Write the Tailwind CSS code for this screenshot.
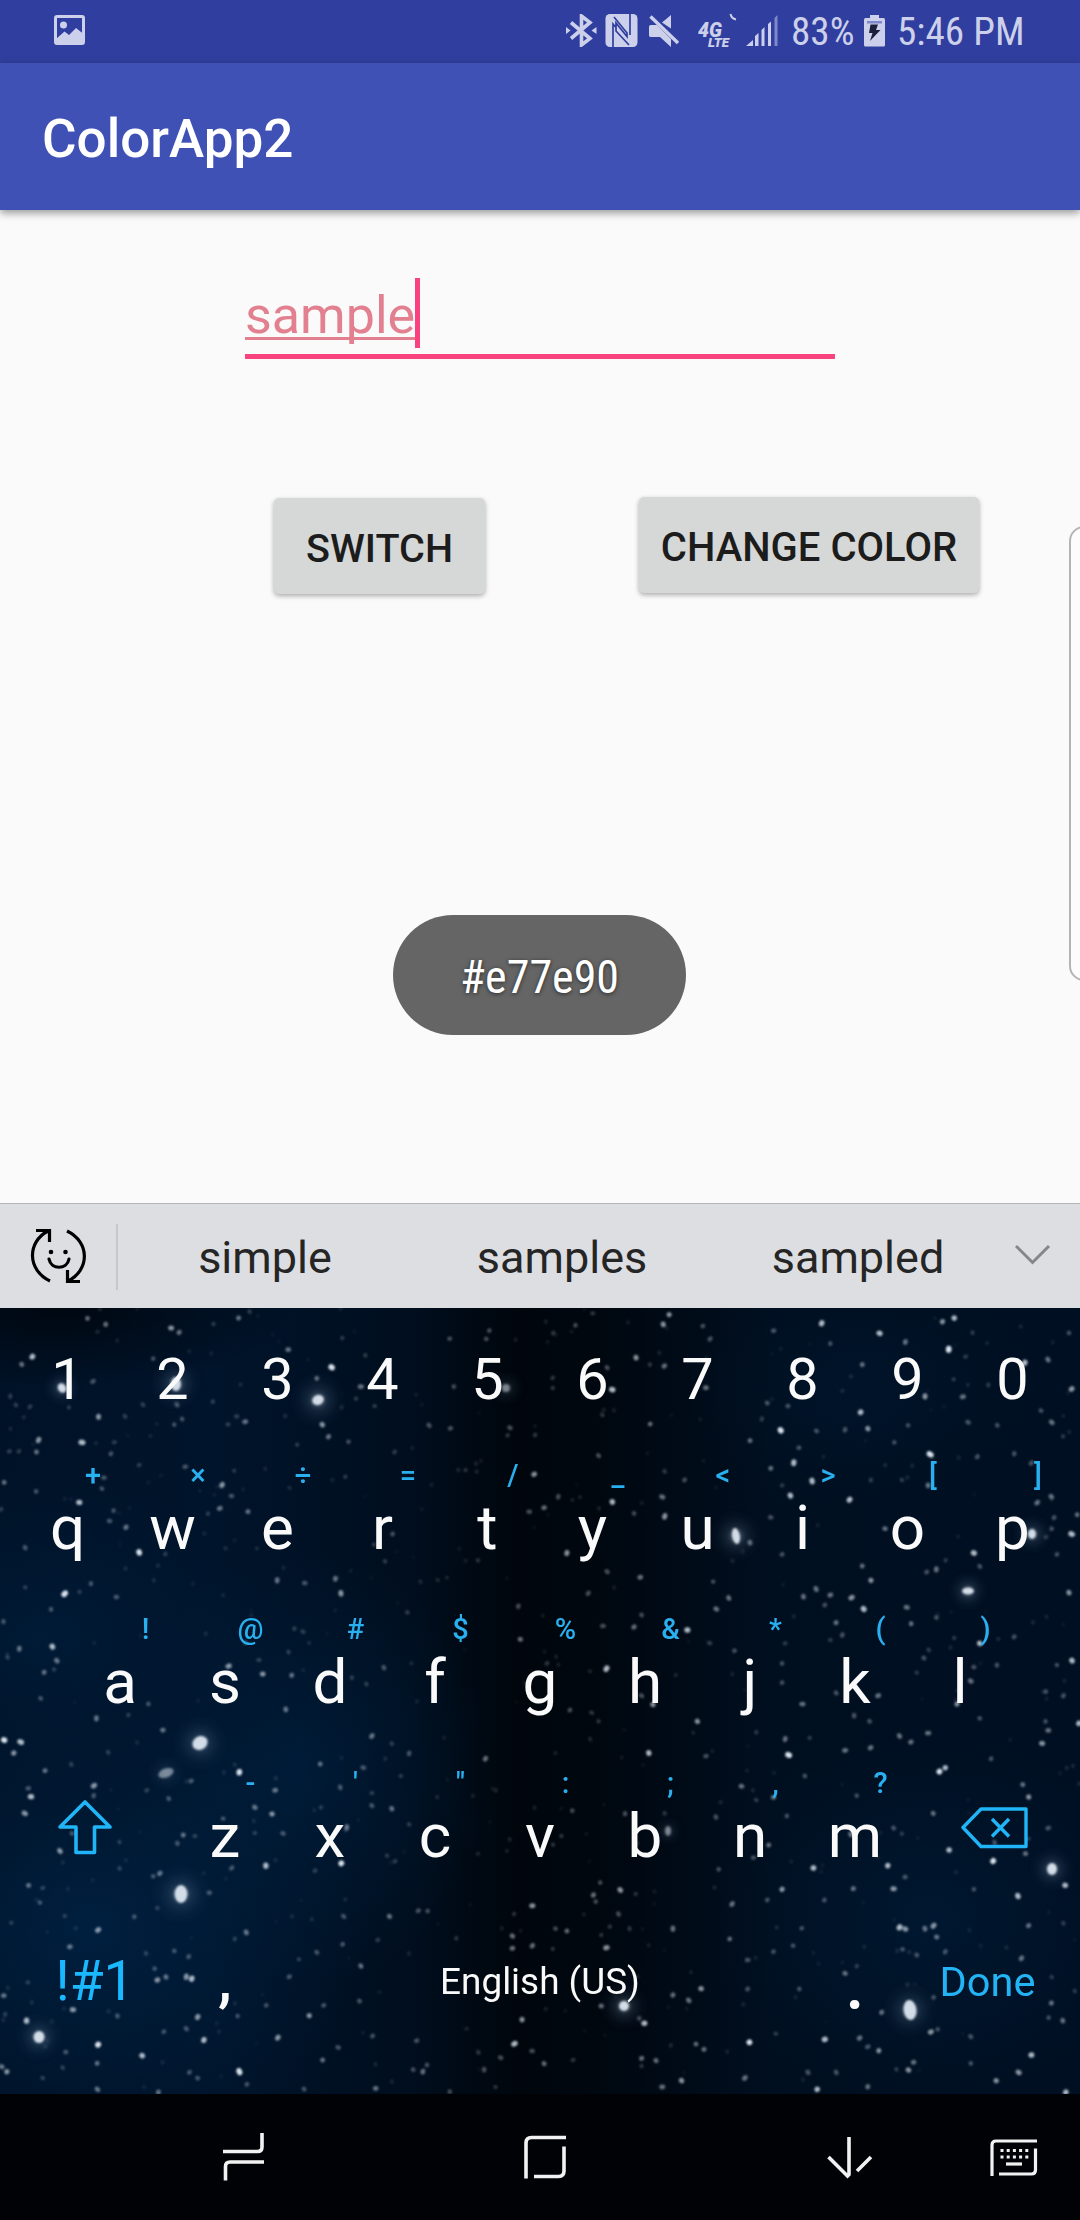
<!DOCTYPE html>
<html lang="en">
<head>
<meta charset="utf-8">
<title>ColorApp2</title>
<script src="https://cdn.jsdelivr.net/npm/@tailwindcss/browser@4"></script>
</head>
<body class="w-[1080px] h-[2220px] overflow-hidden bg-[#fafafa] font-[Roboto,sans-serif]">
<div class="relative flex flex-col w-[1080px] h-[2220px]">

  <!-- Status bar -->
  <header class="flex h-[63px] shrink-0 bg-[#303f9f] text-[#cdd0ea]">
    <svg class="ml-[54px] mt-[15px] shrink-0" width="31" height="30" viewBox="0 0 31 30"><rect x="1.5" y="1.5" width="28" height="27" rx="1.5" fill="none" stroke="currentColor" stroke-width="3"/><circle cx="9.5" cy="10" r="3.5" fill="currentColor"/><path d="M2 24L10.500 16.500L15 20L22 13L29 18.500V28H2Z" fill="currentColor"/></svg>
    <svg class="ml-[481px] mt-[14px] shrink-0" width="31" height="33" viewBox="0 0 31 33"><path d="M5 8.500L24 24.500L15.500 31V2L24 8.500L5 24.500" fill="none" stroke="currentColor" stroke-width="3.600"/><path d="M0 13L4.500 16.500L0 20ZM30.500 13L25.500 16.500L30.500 20Z" fill="currentColor"/></svg>
    <svg class="ml-[8px] mt-[14px] shrink-0" width="33" height="33" viewBox="0 0 33 33"><rect x=".5" y="0" width="32" height="33" rx="4.500" fill="currentColor"/><path d="M8 33V10L11 13.500V9L22 22.500V19L9 3M25 0V21M11 14V17L24 31" fill="none" stroke="#303f9f" stroke-width="1.700"/></svg>
    <svg class="ml-[11px] mt-[14px] shrink-0" width="31" height="34" viewBox="0 0 31 34"><path d="M0 12.500Q0 11 2 11H8L22 25V33L11 23H2Q0 23 0 21.500ZM13 8.500L22 1V14.500Z" fill="currentColor"/><path d="M1.500 2.500L29 29" stroke="currentColor" stroke-width="3.400"/></svg>
    <svg class="ml-[18px] mt-[13px] shrink-0" width="42" height="36" viewBox="0 0 42 36"><text x="0" y="23.500" font-size="19.500" font-weight="900" font-style="italic" fill="currentColor" textLength="24" lengthAdjust="spacingAndGlyphs">4G</text><text x="10" y="34" font-size="13" font-weight="900" font-style="italic" fill="currentColor" textLength="21" lengthAdjust="spacingAndGlyphs">LTE</text><path d="M32.500 1Q33.500 5.500 38 6.500" stroke="currentColor" stroke-width="2" fill="none"/></svg>
    <svg class="ml-[6px] mt-[15px] shrink-0" width="33" height="32" viewBox="0 0 33 32"><path d="M0 31L7 25V31ZM9 21L12.500 18V31H9ZM15.500 15L18.500 12V31H15.500ZM22 9L25 6.500V31H22Z" fill="currentColor"/><path d="M28.500 3L31.500 0V31H28.500Z" fill="#7f88c8"/></svg>
    <div class="ml-[12px] w-[64px] text-[39.200px] leading-[65px] whitespace-nowrap"><span class="inline-block [font-stretch:75%]">83%</span></div>
    <svg class="ml-[9px] mt-[15px] shrink-0" width="21" height="32" viewBox="0 0 21 32"><path d="M6 0H15V3H19.500Q21 3 21 5V30Q21 31.500 19.500 31.500H1.500Q0 31.500 0 30V5Q0 3 1.500 3H6Z" fill="currentColor"/><path d="M3 6H18V8.500H3Z" fill="#7f88c8"/><path d="M6.500 9.500H14L12 15H16.500L6 26L8.500 18H5Z" fill="#1c2038"/></svg>
    <div class="ml-[12px] w-[140px] text-[39.200px] leading-[65px] whitespace-nowrap"><span class="inline-block [font-stretch:75%]">5:46 PM</span></div>
  </header>

  <!-- App bar -->
  <div class="relative z-10 h-[147px] shrink-0 bg-[#3f51b5] pl-[42px] text-[53px] font-medium leading-[152px] text-white shadow-[0_3px_8px_rgba(0,0,0,0.4)]">ColorApp2</div>

  <!-- Activity content -->
  <main class="flex flex-col h-[993px] shrink-0">
    <div class="mt-[68px] ml-[245px] w-[590px] h-[81px] border-b-[5px] border-[#f9437f] flex">
      <div class="h-[62px] w-[170px] text-[52px] leading-[75px] text-[#e38090] whitespace-nowrap"><span class="block w-[170px] h-[62px] border-b-[3px] border-[#e38090]">sample</span></div>
      <div class="w-[5px] h-[70px] bg-[#f9437f]"></div>
    </div>
    <div class="mt-[137px] ml-[274px] flex items-start font-medium text-[#1c1c1c] whitespace-nowrap">
      <button class="mt-[2px] w-[211px] h-[96px] rounded-[5px] bg-[#d6d8d7] text-[39.600px] leading-[102px] shadow-[0_2px_5px_rgba(0,0,0,0.32)]">SWITCH</button>
      <button class="ml-[154px] mt-px w-[340px] h-[96px] rounded-[5px] bg-[#d6d8d7] text-[40px] leading-[102px] shadow-[0_2px_5px_rgba(0,0,0,0.32)]">CHANGE COLOR</button>
    </div>
    <div class="mt-[321px] ml-[393px] w-[293px] h-[120px] rounded-[60px] bg-[#656565] flex justify-center text-[46px] leading-[124px] text-white [text-shadow:0_1px_4px_rgba(0,0,0,0.6)]"><span class="inline-block [font-stretch:75%]">#e77e90</span></div>
  </main>

  <!-- Edge panel handle -->
  <div class="absolute left-[1069px] top-[526px] w-[30px] h-[455px] rounded-[18px] border-2 border-[#b4b4b4] bg-[#fcfcfc]"></div>

  <!-- Suggestion bar -->
  <div class="flex h-[105px] shrink-0 border-t border-[#b3b5b8] bg-[#dddee2] text-[45px] leading-[107px] text-[#252525]">
    <svg class="ml-[30px] mt-[24px] shrink-0" width="58" height="56" viewBox="0 0 58 56" fill="none" stroke="#000" stroke-width="3.200"><path d="M18 3C-3 14-3 42 20 53M37 3C60 14 60 42 38 53M6 2.500H19.500V14M50 53.500H37.500V42"/><path d="M19 31C21 42 37 42 39 31" stroke-linecap="round"/><circle cx="21" cy="24" r="2.300" fill="#000" stroke="none"/><circle cx="35.500" cy="24" r="2.300" fill="#000" stroke="none"/></svg>
    <div class="ml-[28px] mt-[20px] w-[2px] h-[66px] bg-[#c6c7ca]"></div>
    <div class="ml-[52px] w-[190px] text-center">simple</div>
    <div class="ml-[102px] w-[200px] text-center">samples</div>
    <div class="ml-[96px] w-[200px] text-center">sampled</div>
    <svg class="ml-[57px] mt-[40px] shrink-0" width="36" height="22" viewBox="0 0 36 22" fill="none" stroke="#85868a" stroke-width="3"><path d="M1 2L17.500 18.500L34 2"/></svg>
  </div>

  <!-- Keyboard -->
  <section class="relative h-[786px] shrink-0 overflow-hidden text-[#fafafa]">
    <svg id="sky" class="absolute inset-0" width="1080" height="786" viewBox="0 0 1080 786">
      <defs>
        <linearGradient id="base" x1="0" x2="1" y1="0" y2="0"><stop offset="0" stop-color="#001227"/><stop offset=".2" stop-color="#00142b"/><stop offset=".38" stop-color="#000e1e"/><stop offset=".48" stop-color="#00060c"/><stop offset=".55" stop-color="#00070f"/><stop offset=".72" stop-color="#000f20"/><stop offset="1" stop-color="#000f22"/></linearGradient>
        <radialGradient id="blue"><stop offset="0" stop-color="#00254a" stop-opacity=".85"/><stop offset="1" stop-color="#00213f" stop-opacity="0"/></radialGradient>
        <radialGradient id="dark"><stop offset="0" stop-color="#000307" stop-opacity=".7"/><stop offset="1" stop-color="#000307" stop-opacity="0"/></radialGradient>
        <radialGradient id="halo"><stop offset="0" stop-color="#c4d6e6" stop-opacity=".6"/><stop offset=".35" stop-color="#7f9bb8" stop-opacity=".2"/><stop offset=".7" stop-color="#6080a0" stop-opacity=".05"/><stop offset="1" stop-color="#6080a0" stop-opacity="0"/></radialGradient>
        <filter id="soft"><feGaussianBlur stdDeviation=".9"/></filter>
      </defs>
      <rect width="1080" height="786" fill="url(#base)"/>
      <ellipse cx="40" cy="330" rx="220" ry="170" fill="url(#blue)" opacity=".5"/>
      <ellipse cx="300" cy="460" rx="190" ry="220" fill="url(#blue)" opacity=".6"/>
      <ellipse cx="90" cy="620" rx="280" ry="230" fill="url(#blue)" opacity=".8"/>
      <ellipse cx="930" cy="610" rx="220" ry="190" fill="url(#blue)" opacity=".45"/>
      <ellipse cx="860" cy="80" rx="180" ry="130" fill="url(#blue)" opacity=".25"/>
      <ellipse cx="60" cy="0" rx="240" ry="80" fill="url(#dark)"/>
      <g id="stars" filter="url(#soft)" fill="#d8e2ec"></g>
    </svg>
    <div class="relative flex flex-col">
      <div class="flex h-[143px] px-[15px] text-[57.600px] leading-[143px]" id="digits"></div>
      <div class="flex h-[154px] px-[15px]" data-keys="q+ w× e÷ r= t/ y_ u< i> o[ p]"></div>
      <div class="flex h-[154px] px-[67.500px]" data-keys="a! s@ d# f$ g% h& j* k( l)"></div>
      <div class="flex h-[154px]">
        <svg class="ml-[57px] mt-[41px] shrink-0" width="56" height="56" viewBox="0 0 56 56" fill="none" stroke="#1fb5f8" stroke-width="3.600" stroke-linejoin="round"><path d="M28 2L53 27H37.500V52.500H19V27H3Z"/></svg>
        <div class="ml-[59.500px] flex" data-keys="z- x' c&quot; v: b; n, m?"></div>
        <svg class="ml-[53px] mt-[47px] shrink-0" width="68" height="44" viewBox="0 0 68 44" fill="none" stroke="#1fb5f8" stroke-width="3.400" stroke-linejoin="round"><path d="M2 21.500L20 3H65V40.500H20Z"/><path d="M31 13L48 30.500M48 13L31 30.500"/></svg>
      </div>
      <div class="flex h-[181px] pl-[15px] text-center">
        <div class="w-[160px] text-[55px] leading-[137px] text-[#1ab8ff]">!#1</div>
        <div class="w-[100px] text-[62px] font-medium leading-[132px]">,</div>
        <div class="w-[530px] text-[36.900px] leading-[137px]">English (US)</div>
        <div class="w-[100px] text-[84px] leading-[135px]">.</div>
        <div class="w-[165px] text-[41.500px] leading-[137px] text-[#22b4f5]">Done</div>
      </div>
    </div>
  </section>

  <!-- Navigation bar -->
  <nav class="flex h-[126px] shrink-0 bg-[#010206] text-[#f2f2f2]">
    <svg class="ml-[222px] mt-[39px] shrink-0" width="43" height="48" viewBox="0 0 43 48" fill="none" stroke="currentColor" stroke-width="3.600"><path d="M40 0V14Q40 18.500 35.500 18.500H1M42 29H8Q3.500 29 3.500 33.500V47.500"/></svg>
    <svg class="ml-[258px] mt-[41px] shrink-0" width="44" height="44" viewBox="0 0 44 44" fill="none" stroke="currentColor" stroke-width="3.600"><path d="M3 43.500V8Q3 2.500 8.500 2.500H43M41 11.500V36Q41 41.500 35.500 41.500H11"/></svg>
    <svg class="ml-[260px] mt-[43px] shrink-0" width="46" height="42" viewBox="0 0 46 42" fill="none" stroke="currentColor" stroke-width="3.600"><path d="M22 0V37.500L20.500 39L1.500 20M44 20L30 34"/></svg>
    <svg class="ml-[117px] mt-[45px] shrink-0" width="48" height="38" viewBox="0 0 48 38" fill="none" stroke="currentColor" stroke-width="3.200"><path d="M2 37V6Q2 2 6 2H47M45.500 9.500V31Q45.500 35 41.500 35H9"/><path d="M10.500 11.500H39M10.500 18H39" stroke-dasharray="3 3.200"/><path d="M16 25H32"/></svg>
  </nav>
</div>

<script>
  // Key caps
  const digits = document.getElementById('digits');
  for (const d of '1234567890') {
    const el = document.createElement('div');
    el.className = 'w-[105px] text-center';
    el.textContent = d;
    digits.append(el);
  }
  for (const row of document.querySelectorAll('[data-keys]')) {
    for (const pair of row.dataset.keys.split(' ')) {
      const key = document.createElement('div');
      key.className = 'w-[105px] flex flex-col text-center';
      const hint = document.createElement('span');
      hint.className = 'pl-[51px] text-[29px] font-medium leading-[48px] text-[#29b0f0]';
      hint.textContent = pair[1];
      const cap = document.createElement('span');
      cap.className = 'text-[62px] leading-[57px]';
      cap.textContent = pair[0];
      key.append(hint, cap);
      row.append(key);
    }
  }

  // Starfield: x, y, brightness (1-9) per quadrant tile, tile units of 1/2.904 x 1/3 px
  const tiles = [
    [0, -8, '254,55,6 307,73,6 283,95,3 497,84,7 520,97,6 620,72,4 693,54,6 725,35,4 290,28,3 994,114,4 837,149,6 94,170,8 63,193,6 445,176,5 963,202,9 920,235,6 1048,260,6 1034,296,4 270,244,5 30,289,4 46,315,4 87,320,4 200,322,4 415,314,4 514,314,5 618,305,4 286,350,7 363,349,4 529,357,5 506,374,5 687,349,4 662,373,4 712,365,6 828,348,3 936,374,7 954,410,6 1012,425,5 992,322,3 1088,318,4 1306,116,5 1421,92,5 1412,117,5 1061,166,4 1318,260,5 1246,376,5 1308,385,5 1481,383,5 1474,406,4 1554,405,4 238,427,8 112,420,7 106,456,6 55,454,4 27,454,4 332,427,4 322,461,5 863,434,4 1146,456,4 404,495,4 538,500,5 680,512,4 12,547,6 105,574,5 296,566,5 302,533,5 645,555,7 672,588,5 1003,530,4 841,563,3 1551,523,7 230,607,8 330,632,5 318,663,5 366,682,6 638,625,6 720,635,6 604,641,4 404,757,9 480,762,4 73,743,5 3,628,4 1140,702,5 1086,734,4 655,745,3 746,745,3 1118,784,4 1388,781,4 805,841,6 885,849,5 974,836,6 990,880,7 188,881,9 231,876,4 264,851,5 338,891,5 73,862,4 447,841,3 148,928,5 10,965,5 1505,919,5 1183,937,4 1537,635,5 855,986,4 880,995,4 713,1028,5 1511,1018,6 56,1046,6 152,1040,8 165,1082,6 128,1117,6 22,1072,4 157,1108,4 664,1098,7 763,1122,7 847,1126,6 838,1056,4 752,1080,4 1115,1103,5 1022,1133,4 118,1195,5 1064,1152,4 1195,1090,3 1298,833,3 1271,840,3 1221,845,3 1352,510,4 1331,510,3 1384,515,3'],
    [540, -8, '153,40,4 103,76,5 38,99,4 375,44,7 358,73,7 473,78,5 494,117,5 678,92,5 843,131,5 818,70,8 986,100,8 1061,126,6 1169,65,7 1203,54,8 1187,148,9 1236,170,4 1256,98,4 1536,99,5 1475,179,6 1408,188,8 279,173,7 195,203,5 361,198,6 319,194,4 210,269,8 482,263,6 37,234,4 37,264,4 320,372,6 181,345,4 660,309,5 720,318,5 644,357,4 610,422,6 699,391,9 752,443,5 803,393,5 886,389,5 952,386,7 931,337,8 936,194,6 903,229,3 878,273,3 1118,289,7 1228,290,6 1201,238,4 1302,255,4 1544,267,7 1455,332,5 1243,367,5 1328,376,5 1486,367,6 1519,409,4 1069,376,5 1029,427,5 1133,463,9 1270,470,5 1377,461,5 1427,489,5 170,467,5 362,514,4 420,540,5 355,591,6 670,505,6 737,488,8 727,587,8 790,543,8 899,599,8 961,540,4 1051,540,4 1127,556,6 703,556,4 210,606,8 273,640,5 362,649,7 53,590,5 12,623,6 94,600,3 670,652,5 1002,686,6 1485,590,6 1444,608,6 1493,653,5 1560,644,6 1544,702,8 1486,686,5 1469,711,4 1260,759,8 1277,799,5 1151,808,6 1123,816,5 1501,763,5 1178,781,4 610,728,6 703,763,5 78,759,7 195,815,5 291,832,6 503,845,5 140,880,5 548,894,6 512,927,6 802,867,6 843,885,6 765,890,6 905,893,7 827,915,5 936,798,6 961,841,7 940,927,8 1065,922,6 1078,971,6 1151,953,5 1536,878,7 428,990,8 295,945,5 183,978,5 273,981,6 494,1030,4 565,1052,5 712,1030,4 860,968,6 878,1005,5 843,1020,4 1277,1030,8 1203,1014,4 1377,1010,5 1331,1017,3 1545,1082,8 1501,1095,5 1327,1095,5 1260,1101,5 1251,1143,6 1115,1074,5 1129,1050,4 1094,1118,4 193,1106,8 703,1090,5 703,1148,5 860,1179,5 982,1187,6 295,1187,5 1520,1187,5 1469,1175,5 145,1114,3 20,1090,4 394,1125,3'],
    [0, 392, '431,12,5 373,45,4 830,28,6 280,55,6 12,120,9 60,126,8 40,159,7 131,212,6 207,193,4 473,90,6 314,157,4 1080,108,6 1188,160,5 1138,131,4 695,217,9 273,257,7 272,287,5 90,290,8 82,265,5 72,340,7 174,453,7 209,400,5 930,192,6 1055,203,5 988,262,5 1080,279,4 799,271,6 740,322,6 790,342,7 932,322,4 1080,317,5 1138,326,6 1410,176,6 1164,228,4 1440,271,3 490,296,5 426,271,4 555,243,5 648,356,5 532,405,6 515,430,5 566,408,4 822,400,5 740,399,4 1188,373,4 1007,382,6 991,490,9 772,497,8 673,504,5 915,512,4 347,426,4 347,505,4 445,529,5 464,520,6 83,556,6 124,564,4 116,608,5 390,650,5 457,624,4 608,578,5 33,668,4 188,648,4 285,690,7 203,740,6 715,697,6 682,717,4 506,753,5 548,770,5 848,649,3 998,649,5 1131,649,6 1215,632,5 1242,633,5 1147,484,4 1124,467,4 1097,720,4 995,733,5 1048,798,6 1546,617,7 1493,642,4 1488,708,6 1488,745,6 1546,737,6 1325,715,4 920,757,5 868,778,4 840,830,5 449,806,5 457,840,7 482,831,6 541,830,7 557,836,8 424,760,4 81,847,4 11,887,6 15,943,4 77,962,8 212,929,7 341,948,5 574,951,7 690,948,5 773,916,5 898,947,7 940,916,5 1044,903,5 807,1013,7 592,1020,8 541,986,5 476,995,5 982,1042,5 1082,1008,5 285,1034,9 413,1067,8 191,1056,5 282,1090,6 182,1103,4 124,1134,4 20,1115,7 5,1100,6 550,1117,5 574,1134,5 695,1115,9 937,1080,6 883,1167,5 717,1153,5 283,1168,6 460,1177,6 1091,1165,6 1516,959,7 1494,1031,8 1210,1022,5 1200,1109,5 1228,1115,6 1240,1095,5 1389,1057,4 1454,1073,5 1406,1109,5 1545,1053,5 1439,1161,4 1306,1175,5 1355,986,3 1480,418,3 1388,461,3 1472,453,3'],
    [540, 392, '328,14,7 457,64,7 87,30,5 150,38,4 170,64,4 762,12,6 912,47,5 957,64,5 1044,108,6 1077,126,6 1127,99,6 1211,12,7 1277,55,5 1468,64,5 1476,91,6 1458,130,7 1565,70,8 1310,176,5 960,143,6 886,151,6 712,117,6 783,114,4 722,165,9 316,159,8 482,168,5 628,97,4 145,116,3 1160,215,9 1177,203,8 1402,254,6 1419,291,7 769,228,5 585,259,6 618,271,3 678,292,6 628,300,4 920,287,5 1142,340,6 511,351,5 717,348,5 362,340,4 247,341,5 94,332,5 62,408,4 38,434,4 664,435,6 620,473,5 902,403,6 794,504,8 1010,497,8 1027,384,5 1051,401,4 1188,450,8 1316,483,9 1320,428,5 1410,461,6 1419,416,4 1476,384,5 1060,531,5 1027,566,7 910,566,6 826,600,5 703,568,7 660,600,5 558,612,6 519,508,5 233,570,7 175,548,5 155,585,6 162,605,5 278,582,4 228,642,5 1525,556,8 1388,588,8 1260,568,5 1419,677,6 1044,682,8 1061,687,7 1118,686,6 1143,677,7 1152,711,6 1053,748,5 1094,765,5 1177,755,5 1398,775,6 1520,670,4 760,685,5 735,737,5 678,755,5 551,717,6 386,686,6 203,680,4 193,743,7 78,693,6 45,686,5 178,705,4 260,686,4 37,747,4 603,780,5 468,866,7 386,885,6 432,901,6 603,867,5 753,867,5 886,820,6 920,798,4 178,918,6 303,970,8 288,955,5 685,1001,4 608,1027,9 827,1018,8 453,1032,6 476,1048,6 928,1014,6 952,1040,5 984,1052,7 992,937,6 1135,996,7 1155,988,5 1143,892,5 1485,909,6 1477,953,5 1518,962,6 1427,1065,8 1251,1010,5 1251,1090,5 1085,1087,6 1070,1110,7 1035,1108,4 1390,1117,7 1325,1142,7 952,1160,6 860,1117,5 778,1117,5 595,1134,6 411,1142,7 355,1161,6 337,1082,6 295,1075,6 295,1098,4 12,1091,6 96,1080,4 805,1168,8 1527,1177,8 1486,831,4 1553,873,4 380,1036,3']
  ];
  const group = document.getElementById('stars');
  const ns = 'http://www.w3.org/2000/svg';
  const add = (cx, cy, rx, ry, o, angle = 0, fill = '') => {
    const e = document.createElementNS(ns, 'ellipse');
    e.setAttribute('cx', cx.toFixed(1)); e.setAttribute('cy', cy.toFixed(1));
    e.setAttribute('rx', rx); e.setAttribute('ry', ry); e.setAttribute('opacity', o);
    if (angle) e.setAttribute('transform', `rotate(${angle} ${cx} ${cy})`);
    if (fill) e.setAttribute('fill', fill);
    group.append(e);
  };
  let seed = 11;
  const rnd = () => (seed = (seed * 16807) % 2147483647) / 2147483647;
  for (const [ox, oy, data] of tiles) {
    for (const item of data.split(' ')) {
      const [x, y, b] = item.split(',').map(Number);
      const r = 1.4 + b * 0.16;
      add(ox + x / 2.904, oy + y / 3, r, r * (1 + rnd() * 0.35), Math.min(1, b * b / 82 + 0.03), Math.floor(rnd() * 180));
    }
  }
  for (let i = 0; i < 300; i++) add(rnd() * 1080, rnd() * 786, 2, 2.3, 0.03 + rnd() * 0.1);

  // Large glowing stars: x, y, rx, ry, halo radius, tilt
  for (const [x, y, rx, ry, h, a] of [
    [318, 92, 6, 5, 30, -20], [62, 80, 4, 5, 20, -30], [176, 76, 5, 7, 28, 0], [506, 80, 4, 4, 22, 0],
    [736, 228, 4, 8, 28, -10], [968, 283, 6, 3.5, 22, 0], [1032, 226, 4, 5, 22, 0],
    [200, 435, 8, 6.5, 30, -30], [166, 465, 8, 4.5, 22, -20], [181, 586, 6.5, 9, 32, 0],
    [39, 729, 5.5, 6, 26, 0], [910, 702, 6.5, 10, 30, -8], [1052, 561, 5, 6, 24, 0],
    [624, 698, 5, 5, 26, 0], [668, 523, 3, 5, 18, 0]
  ]) {
    const faint = x === 668 || x === 506 || x === 166;
    add(x, y, h, h, faint ? .35 : .75, 0, 'url(#halo)');
    add(x, y, rx, ry, faint ? .5 : .97, a);
  }
</script>
</body>
</html>
